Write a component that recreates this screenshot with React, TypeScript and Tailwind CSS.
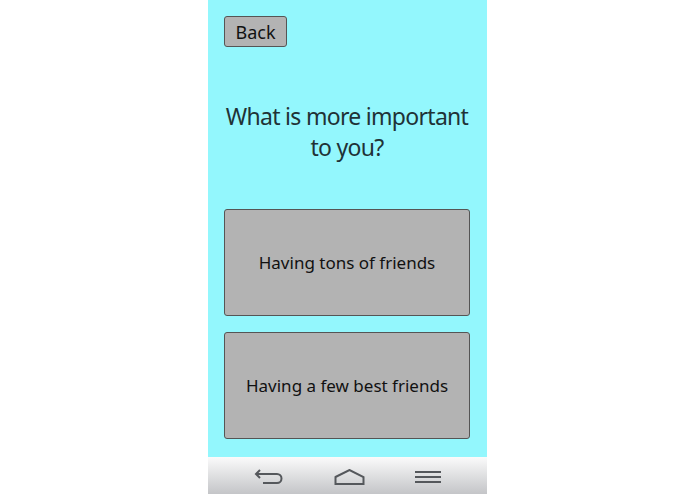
import React from 'react';

function NavBar() {
  return (
    <div className="h-[37px] flex items-center justify-center gap-[50px] pt-[3px] bg-gradient-to-b from-[#fbfbfb] to-[#c4c5c8]">
      <svg width="30" height="16" viewBox="0 0 30 16" fill="none" stroke="#55585c" strokeWidth="2">
        <path d="M6 1 L2 5 L6 9" />
        <path d="M2 5 H23 a4.5 4.5 0 0 1 0 9 H9" />
      </svg>
      <svg width="31" height="16" viewBox="0 0 31 16" fill="none" stroke="#55585c" strokeWidth="2">
        <path d="M1.5 8 L15.5 1 L29.5 8 V15 H1.5 Z" />
      </svg>
      <svg width="26" height="14" viewBox="0 0 26 14" fill="none" stroke="#55585c" strokeWidth="2">
        <path d="M0 2 H26 M0 7 H26 M0 12 H26" />
      </svg>
    </div>
  );
}

export default function App() {
  const font = { fontFamily: '"Noto Sans", "Open Sans", sans-serif' };
  return (
    <div className="min-h-screen bg-white flex justify-center" style={font}>
      <div className="w-[279px] h-[494px] flex flex-col">
        <div className="flex-1 bg-[#93f7fd] pl-4 pr-[17px] pt-4 flex flex-col">
          <button className="self-start w-[63px] h-[31px] bg-[#b3b3b3] border border-[#555] rounded-[3px] text-[18px] text-[#111] leading-none">
            Back
          </button>
          <h1 className="mt-[54px] -mx-4 text-center text-[23px] tracking-[-0.7px] leading-[31px] text-[#1f3236]">
            What is more important
            <br />
            to you?
          </h1>
          <div className="mt-[46px] flex flex-col gap-4">
            <button className="h-[107px] bg-[#b3b3b3] border border-[#555] rounded-[3px] text-[17px] text-[#111]">
              Having tons of friends
            </button>
            <button className="h-[107px] bg-[#b3b3b3] border border-[#555] rounded-[3px] text-[17px] text-[#111]">
              Having a few best friends
            </button>
          </div>
        </div>
        <NavBar />
      </div>
    </div>
  );
}
